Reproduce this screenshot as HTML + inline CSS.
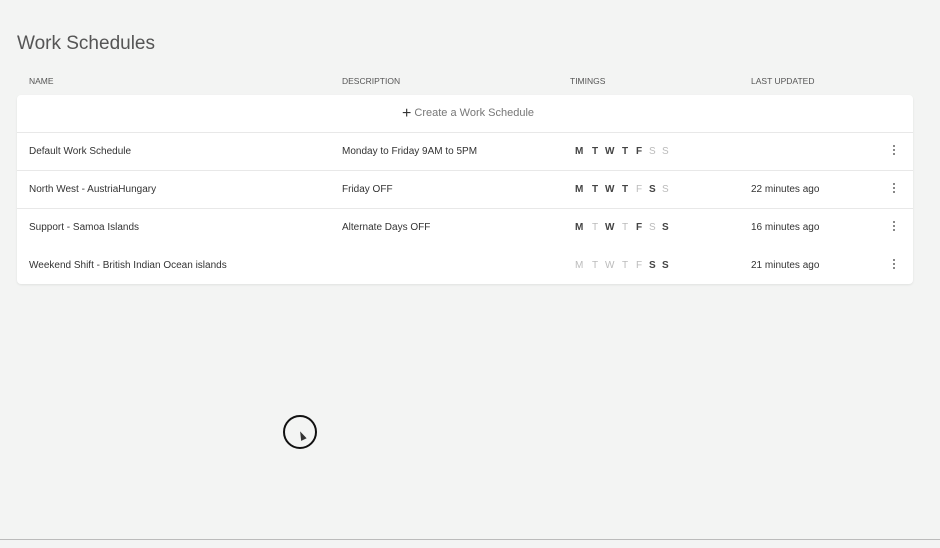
<!DOCTYPE html>
<html><head><style>
body{margin:0;width:940px;height:548px;background:#f3f4f3;font-family:"Liberation Sans",sans-serif;position:relative;overflow:hidden;color:#333}
.t{position:absolute;left:17px;top:33px;font-size:19px;color:#555;font-weight:300}
.h{position:absolute;top:76px;font-size:8.5px;color:#555}
.card{position:absolute;left:17px;top:95px;width:896px;height:189px;background:#fff;border-radius:4px;box-shadow:0 1px 2px rgba(0,0,0,.08)}
.row{position:absolute;left:0;width:896px;height:38px;border-top:1px solid #e8e8e8;font-size:10px;color:#333}
.row span{position:absolute;top:13px}
.row b{position:absolute;top:13px;font-size:10px;font-weight:bold;color:#444}
.row b.g{color:#bbb;font-weight:normal}
.dots{position:absolute;left:876px;top:12px;width:2px}
.dots i{display:block;width:1.5px;height:2px;background:#888;margin-bottom:2px}
</style></head><body>
<div class="t">Work Schedules</div>
<div class="h" style="left:29px">NAME</div>
<div class="h" style="left:342px">DESCRIPTION</div>
<div class="h" style="left:570px">TIMINGS</div>
<div class="h" style="left:751px">LAST UPDATED</div>
<div class="card">
<div style="position:absolute;left:385px;top:10px;font-size:11px;color:#777"><span style="font-size:16px;color:#333;vertical-align:-2px">+</span> Create a Work Schedule</div>
<div class="row" style="top:37px"><span style="left:12px">Default Work Schedule</span><span style="left:325px">Monday to Friday 9AM to 5PM</span>
<b style="left:558px">M</b><b style="left:575px">T</b><b style="left:588px">W</b><b style="left:605px">T</b><b style="left:619px">F</b><b class="g" style="left:632px">S</b><b class="g" style="left:645px">S</b>
<div class="dots"><i></i><i></i><i></i></div></div>
<div class="row" style="top:75px"><span style="left:12px">North West - AustriaHungary</span><span style="left:325px">Friday OFF</span>
<b style="left:558px">M</b><b style="left:575px">T</b><b style="left:588px">W</b><b style="left:605px">T</b><b class="g" style="left:619px">F</b><b style="left:632px">S</b><b class="g" style="left:645px">S</b>
<span style="left:734px">22 minutes ago</span><div class="dots"><i></i><i></i><i></i></div></div>
<div class="row" style="top:113px"><span style="left:12px">Support - Samoa Islands</span><span style="left:325px">Alternate Days OFF</span>
<b style="left:558px">M</b><b class="g" style="left:575px">T</b><b style="left:588px">W</b><b class="g" style="left:605px">T</b><b style="left:619px">F</b><b class="g" style="left:632px">S</b><b style="left:645px">S</b>
<span style="left:734px">16 minutes ago</span><div class="dots"><i></i><i></i><i></i></div></div>
<div class="row" style="top:151px;border-top-color:#fff"><span style="left:12px">Weekend Shift - British Indian Ocean islands</span>
<b class="g" style="left:558px">M</b><b class="g" style="left:575px">T</b><b class="g" style="left:588px">W</b><b class="g" style="left:605px">T</b><b class="g" style="left:619px">F</b><b style="left:632px">S</b><b style="left:645px">S</b>
<span style="left:734px">21 minutes ago</span><div class="dots"><i></i><i></i><i></i></div></div>
</div>
<div style="position:absolute;left:283px;top:415px;width:34px;height:34px;border:2px solid #111;border-radius:50%;box-sizing:border-box"></div>
<div style="position:absolute;left:299px;top:431px;width:0;height:0;border-left:3px solid transparent;border-right:3px solid transparent;border-bottom:9px solid #333;transform:rotate(-25deg)"></div>
<div style="position:absolute;left:0;top:539px;width:940px;height:1px;background:#bbb"></div>
</body></html>
